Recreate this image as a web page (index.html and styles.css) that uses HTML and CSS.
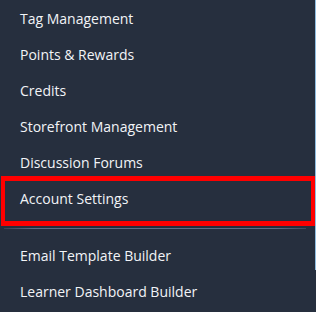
FILE: index.html
```html
<!DOCTYPE html>
<html>
<head>
<meta charset="utf-8">
<link rel="stylesheet" href="styles.css">
</head>
<body>
<nav class="menu">
  <ul class="list">
    <li class="item">Tag Management</li>
    <li class="item">Points &amp; Rewards</li>
    <li class="item">Credits</li>
    <li class="item">Storefront Management</li>
    <li class="item">Discussion Forums</li>
    <li class="item item-highlight">Account Settings</li>
  </ul>
  <div class="divider"></div>
  <ul class="list">
    <li class="item">Email Template Builder</li>
    <li class="item">Learner Dashboard Builder</li>
  </ul>
  <div class="scroll-thumb"></div>
</nav>
</body>
</html>
```
FILE: styles.css
```css
html, body {
  margin: 0;
  padding: 0;
  background: #262f3e;
}
.menu {
  position: relative;
  width: 316px;
  height: 312px;
  background: #262f3e;
  padding-top: 1px;
  box-sizing: border-box;
  font-family: "Open Sans", "Liberation Sans", sans-serif;
  font-size: 14px;
  color: #f2f4f7;
  overflow: hidden;
}
.list {
  list-style: none;
  margin: 0;
  padding: 0;
}
.item {
  height: 36px;
  line-height: 36px;
  padding-left: 20px;
  white-space: nowrap;
}
.item-highlight {
  position: relative;
}
.item-highlight::after {
  content: "";
  position: absolute;
  left: 1px;
  right: 1px;
  top: -5px;
  bottom: -9px;
  border-style: solid;
  border-color: #ff0000;
  border-width: 5px 4px;
}
.divider {
  height: 1px;
  margin: 11px 10px 9px 4px;
  background: linear-gradient(to right, rgba(100,116,140,0.3), #5e6e86 10%, #5e6e86 90%, rgba(100,116,140,0.4));
}
.scroll-thumb {
  position: absolute;
  right: 0;
  top: 0;
  width: 1px;
  height: 270px;
  background: #8fbde0;
}
```
